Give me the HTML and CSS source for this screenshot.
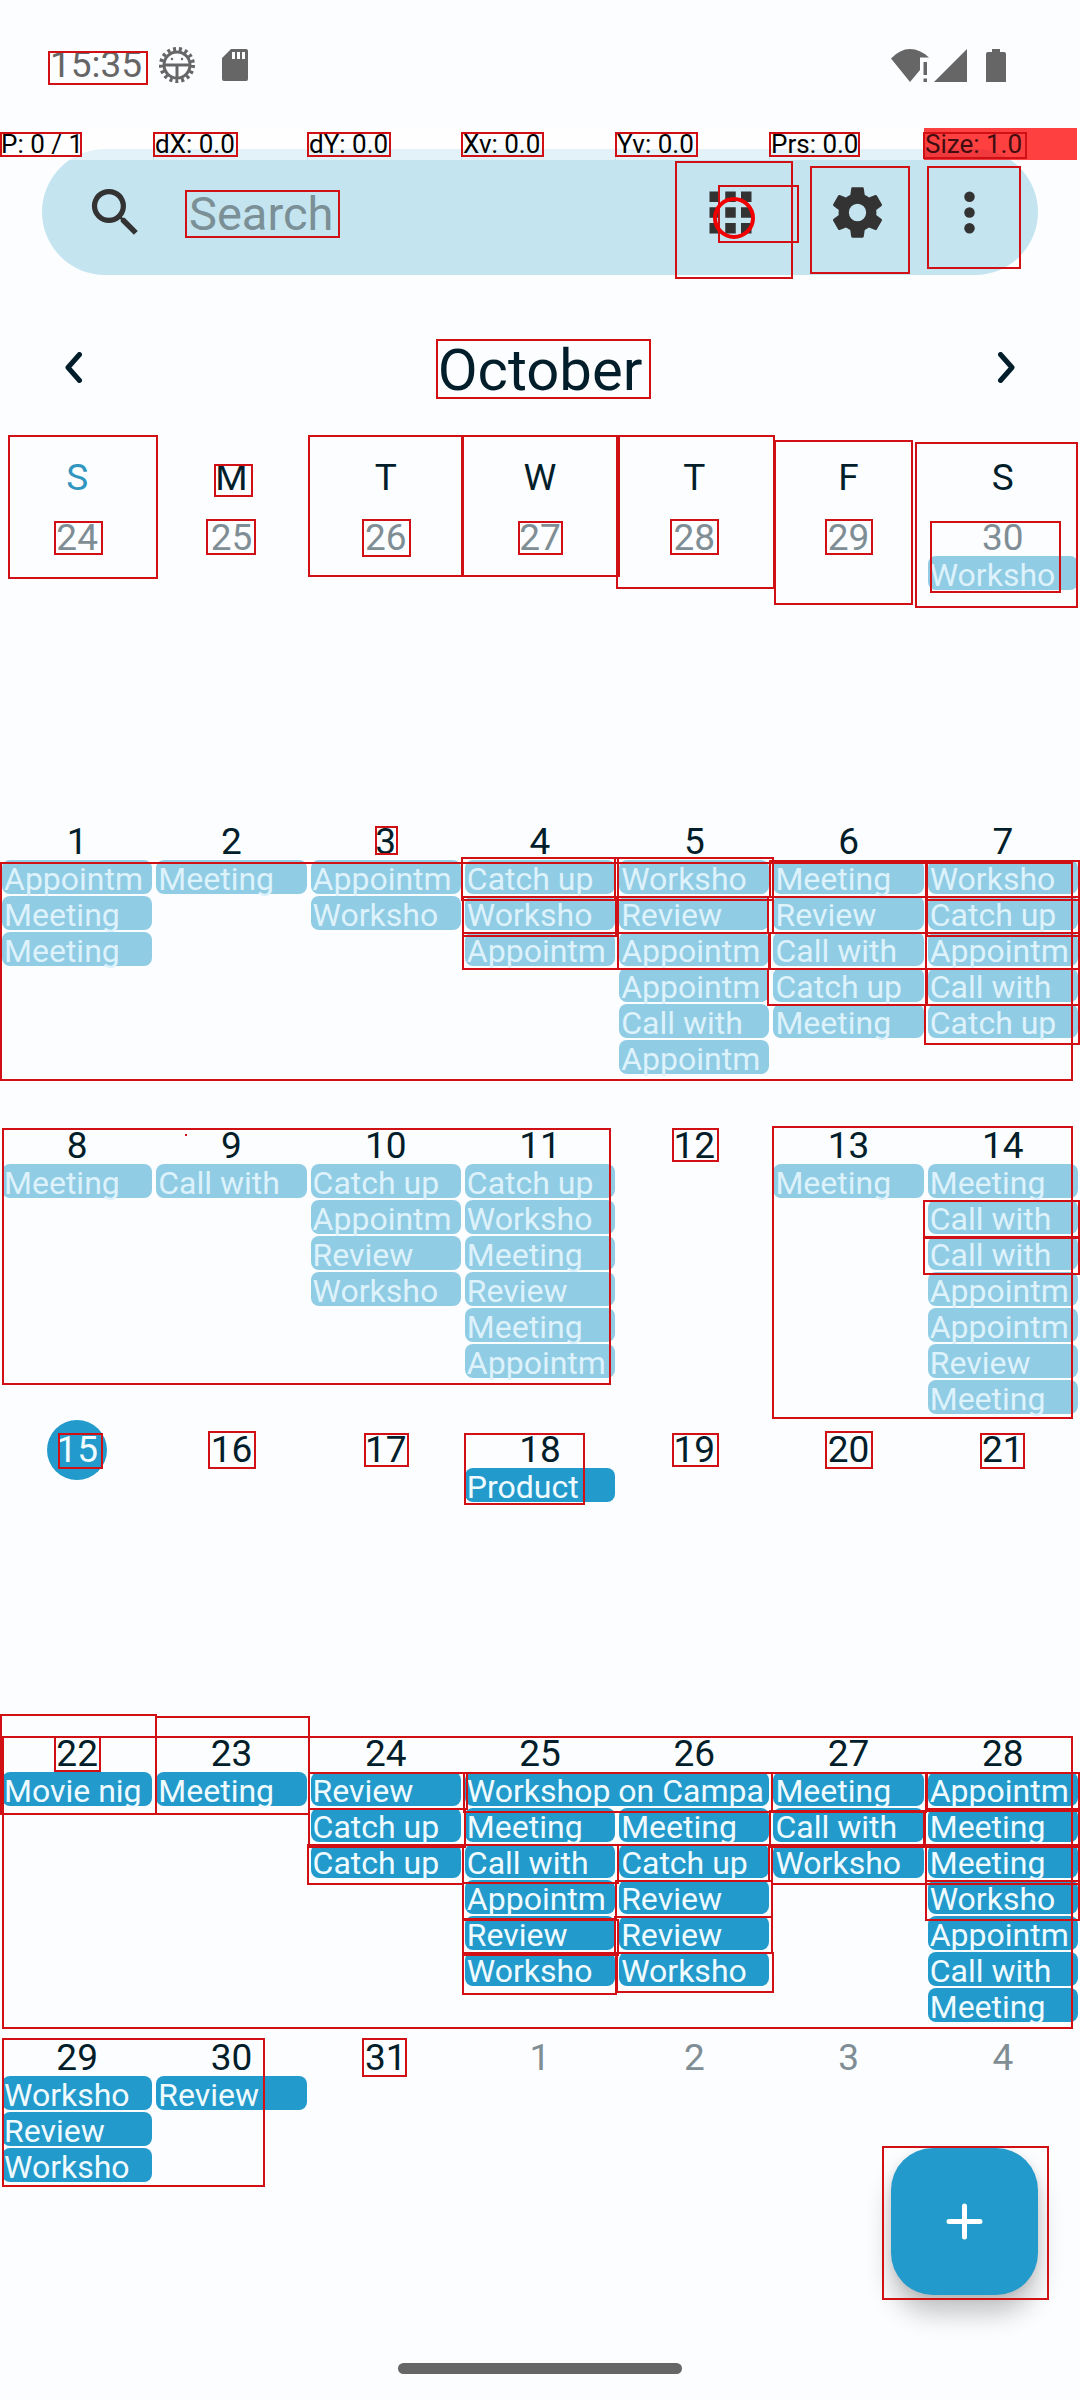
FILE: index.html
```html
<!DOCTYPE html>
<html lang="en">
<head>
<meta charset="utf-8">
<meta name="viewport" content="width=device-width, initial-scale=1">
<title>Calendar – October</title>
<link rel="stylesheet" href="styles.css">
</head>
<body>
<div class="screen">
  <div class="status">
    <time class="status-time">15:35</time>
    <svg class="status-debug" width="36" height="36" viewBox="0 0 36 36" fill="none" stroke="#666">
      <circle cx="18" cy="18" r="13" stroke-width="3"/>
      <circle cx="18" cy="18" r="16" stroke-width="4" stroke-dasharray="3 2.91"/>
      <path d="M5 18H31" stroke-width="3"/><path d="M18 19V32" stroke-width="3"/>
      <circle cx="13" cy="12" r="1.2" fill="#666" stroke="none"/><circle cx="23" cy="12" r="1.2" fill="#666" stroke="none"/>
    </svg>
    <svg class="status-card" width="26" height="32" viewBox="0 0 26 32"><path fill="#666" fill-rule="evenodd" d="M9 0H24Q26 0 26 2V30Q26 32 24 32H2Q0 32 0 30V9ZM10 3V10H13V3ZM15 3V10H18V3ZM20 3V10H23V3Z"/></svg>
    <svg class="status-wifi" width="38" height="33" viewBox="0 0 38 33" fill="#666"><path d="M0 9.500Q9 0 19 0T38 8.500H29V21L19 33Z"/><path d="M32.500 13H36V26H32.500ZM32.500 29.500H36V33H32.500Z"/></svg>
    <svg width="33" height="33" viewBox="0 0 33 33"><path fill="#666" d="M33 0V33H0Z"/></svg>
    <svg class="status-battery" width="20" height="33" viewBox="0 0 20 33"><path fill="#666" d="M6 0H14V3H18Q20 3 20 5V33H0V5Q0 3 2 3H6Z"/></svg>
  </div>

  <form class="searchbar" role="search">
    <label class="searchbar-label" for="q" aria-label="Search events">
      <svg class="icon" viewBox="0 0 24 24"><path d="M15.500 14h-.79l-.28-.27A6.471 6.471 0 0 0 16 9.500 6.500 6.500 0 1 0 9.500 16c1.610 0 3.090-.59 4.230-1.570l.27.28v.79l5 4.990L20.490 19l-4.990-5zm-6 0C7.010 14 5 11.990 5 9.500S7.010 5 9.500 5 14 7.010 14 9.500 11.990 14 9.500 14z"/></svg>
    </label>
    <input class="searchbar-input" id="q" type="text" placeholder="Search">
    <button class="searchbar-btn" type="button" aria-label="Change view">
      <svg class="icon" viewBox="0 0 24 24"><path d="M4 8h4V4H4v4zm6 12h4v-4h-4v4zm-6 0h4v-4H4v4zm0-6h4v-4H4v4zm6 0h4v-4h-4v4zm6-10v4h4V4h-4zm-6 4h4V4h-4v4zm6 6h4v-4h-4v4zm0 6h4v-4h-4v4z"/></svg>
    </button>
    <button class="searchbar-btn" type="button" aria-label="Settings">
      <svg class="icon" viewBox="0 0 24 24"><path d="M19.140 12.940c.04-.3.06-.61.06-.94 0-.32-.02-.64-.07-.94l2.030-1.580c.18-.14.23-.41.12-.61l-1.920-3.320c-.12-.22-.37-.29-.59-.22l-2.390.96c-.5-.38-1.030-.7-1.620-.94l-.36-2.540c-.04-.24-.24-.41-.48-.41h-3.840c-.24 0-.43.17-.47.41l-.36 2.540c-.59.24-1.130.57-1.620.94l-2.390-.96c-.22-.08-.47 0-.59.22L2.740 8.870c-.12.21-.08.47.12.61l2.030 1.580c-.05.3-.09.63-.09.94s.02.64.07.94l-2.030 1.580c-.18.14-.23.41-.12.61l1.920 3.320c.12.22.37.29.59.22l2.390-.96c.5.38 1.030.7 1.620.94l.36 2.540c.05.24.24.41.48.41h3.840c.24 0 .44-.17.47-.41l.36-2.540c.59-.24 1.130-.56 1.620-.94l2.390.96c.22.08.47 0 .59-.22l1.920-3.320c.12-.22.07-.47-.12-.61l-2.010-1.580zM12 15.300a3.300 3.300 0 1 1 0-6.600 3.300 3.300 0 0 1 0 6.600z"/></svg>
    </button>
    <button class="searchbar-btn searchbar-more" type="button" aria-label="More options">
      <svg class="icon" viewBox="0 0 24 24"><circle cx="12" cy="6" r="2"/><circle cx="12" cy="12" r="2"/><circle cx="12" cy="18" r="2"/></svg>
    </button>
  </form>

  <header class="month">
    <button class="month-btn" type="button" aria-label="Previous month"><svg width="17" height="31" viewBox="0 0 17 31"><path d="M14.500 2.500L3 15.500L14.500 28.500"/></svg></button>
    <h1 class="month-name">October</h1>
    <button class="month-btn" type="button" aria-label="Next month"><svg width="17" height="31" viewBox="0 0 17 31"><path d="M2.500 2.500L14 15.500L2.500 28.500"/></svg></button>
  </header>

  <main class="calendar">
    <div class="weekdays"><span class="sunday">S</span><span>M</span><span>T</span><span>W</span><span>T</span><span>F</span><span>S</span></div>

    <section class="week past">
      <div class="day other"><span class="date">24</span></div>
      <div class="day other"><span class="date">25</span></div>
      <div class="day other"><span class="date">26</span></div>
      <div class="day other"><span class="date">27</span></div>
      <div class="day other"><span class="date">28</span></div>
      <div class="day other"><span class="date">29</span></div>
      <div class="day other"><span class="date">30</span><ul class="events"><li>Worksho</li></ul></div>
    </section>

    <section class="week past">
      <div class="day"><span class="date">1</span><ul class="events"><li>Appointm</li><li>Meeting</li><li>Meeting</li></ul></div>
      <div class="day"><span class="date">2</span><ul class="events"><li>Meeting</li></ul></div>
      <div class="day"><span class="date">3</span><ul class="events"><li>Appointm</li><li>Worksho</li></ul></div>
      <div class="day"><span class="date">4</span><ul class="events"><li>Catch up</li><li>Worksho</li><li>Appointm</li></ul></div>
      <div class="day"><span class="date">5</span><ul class="events"><li>Worksho</li><li>Review</li><li>Appointm</li><li>Appointm</li><li>Call with</li><li>Appointm</li></ul></div>
      <div class="day"><span class="date">6</span><ul class="events"><li>Meeting</li><li>Review</li><li>Call with</li><li>Catch up</li><li>Meeting</li></ul></div>
      <div class="day"><span class="date">7</span><ul class="events"><li>Worksho</li><li>Catch up</li><li>Appointm</li><li>Call with</li><li>Catch up</li></ul></div>
    </section>

    <section class="week past">
      <div class="day"><span class="date">8</span><ul class="events"><li>Meeting</li></ul></div>
      <div class="day"><span class="date">9</span><ul class="events"><li>Call with</li></ul></div>
      <div class="day"><span class="date">10</span><ul class="events"><li>Catch up</li><li>Appointm</li><li>Review</li><li>Worksho</li></ul></div>
      <div class="day"><span class="date">11</span><ul class="events"><li>Catch up</li><li>Worksho</li><li>Meeting</li><li>Review</li><li>Meeting</li><li>Appointm</li></ul></div>
      <div class="day"><span class="date">12</span></div>
      <div class="day"><span class="date">13</span><ul class="events"><li>Meeting</li></ul></div>
      <div class="day"><span class="date">14</span><ul class="events"><li>Meeting</li><li>Call with</li><li>Call with</li><li>Appointm</li><li>Appointm</li><li>Review</li><li>Meeting</li></ul></div>
    </section>

    <section class="week">
      <div class="day"><span class="date today">15</span></div>
      <div class="day"><span class="date">16</span></div>
      <div class="day"><span class="date">17</span></div>
      <div class="day"><span class="date">18</span><ul class="events"><li>Product</li></ul></div>
      <div class="day"><span class="date">19</span></div>
      <div class="day"><span class="date">20</span></div>
      <div class="day"><span class="date">21</span></div>
    </section>

    <section class="week">
      <div class="day"><span class="date">22</span><ul class="events"><li>Movie nig</li></ul></div>
      <div class="day"><span class="date">23</span><ul class="events"><li>Meeting</li></ul></div>
      <div class="day"><span class="date">24</span><ul class="events"><li>Review</li><li>Catch up</li><li>Catch up</li></ul></div>
      <div class="day"><span class="date">25</span><ul class="events"><li class="two-days">Workshop on Campa</li><li>Meeting</li><li>Call with</li><li>Appointm</li><li>Review</li><li>Worksho</li></ul></div>
      <div class="day"><span class="date">26</span><ul class="events after-span"><li>Meeting</li><li>Catch up</li><li>Review</li><li>Review</li><li>Worksho</li></ul></div>
      <div class="day"><span class="date">27</span><ul class="events"><li>Meeting</li><li>Call with</li><li>Worksho</li></ul></div>
      <div class="day"><span class="date">28</span><ul class="events"><li>Appointm</li><li>Meeting</li><li>Meeting</li><li>Worksho</li><li>Appointm</li><li>Call with</li><li>Meeting</li></ul></div>
    </section>

    <section class="week">
      <div class="day"><span class="date">29</span><ul class="events"><li>Worksho</li><li>Review</li><li>Worksho</li></ul></div>
      <div class="day"><span class="date">30</span><ul class="events"><li>Review</li></ul></div>
      <div class="day"><span class="date">31</span></div>
      <div class="day other"><span class="date">1</span></div>
      <div class="day other"><span class="date">2</span></div>
      <div class="day other"><span class="date">3</span></div>
      <div class="day other"><span class="date">4</span></div>
    </section>
  </main>

  <footer class="gesture"><span class="gesture-bar"></span></footer>

  <button class="fab" type="button" aria-label="New event"><svg width="37" height="37" viewBox="0 0 37 37"><path d="M18.500 3V34M3 18.500H34"/></svg></button>

  <!-- pointer location strip -->
  <div class="pointer">
    <span>P: 0 / 1</span><span>dX: 0.0</span><span>dY: 0.0</span><span>Xv: 0.0</span><span>Yv: 0.0</span><span>Prs: 0.0</span><span class="pointer-size">Size: 1.0</span>
  </div>

  <!-- detected element bounds -->
  <svg class="bounds" viewBox="0 0 1080 2400" aria-hidden="true">
    <path d="M49 52H147V84H49ZM1 133H81V156H1ZM154 133H237V156H154ZM308 133H390V156H308ZM462 133H543V156H462ZM616 133H697V156H616ZM770 133H859V156H770ZM924 133H1026V158H924Z
    M186 191H339V237H186ZM676 162H792V278H676ZM719 186H798V242H719ZM811 167H909V273H811ZM928 167H1020V268H928ZM437 340H650V398H437Z"/>
    <path d="M9 436H157V578H9ZM215 465H252V496H215ZM55 522H102V554H55ZM207 520H255V554H207ZM309 436H462V576H309ZM363 520H410V556H363ZM463 436H619V576H463ZM519 522H562V554H519ZM617 436H774V588H617ZM671 520H718V554H671ZM775 441H912V604H775ZM826 520H872V554H826ZM916 443H1077V607H916ZM931 522H1060V592H931Z"/>
    <path d="M1 863H1072V1080H1ZM376 827H397V854H376ZM462 858H618V900H462ZM463 897H616V936H463ZM463 933H618V969H463ZM615 858H773V900H615ZM618 897H768V933H618ZM618 933H770V969H618ZM770 861H926V897H770ZM773 897H926V933H773ZM769 933H926V969H769ZM768 969H926V1005H768ZM927 861H1079V900H927ZM927 897H1079V936H927ZM926 933H1079V969H926ZM927 969H1079V1005H927ZM925 1005H1079V1044H925Z"/>
    <path d="M3 1129H610V1384H3ZM185 1135H187M673 1129H718V1161H673ZM773 1127H1072V1418H773ZM924 1201H1079V1237H924ZM924 1238H1079V1274H924ZM59 1434H102V1468H59ZM209 1432H255V1468H209ZM365 1434H408V1466H365ZM465 1434H584V1504H465ZM673 1434H718V1466H673ZM826 1432H872V1468H826ZM981 1434H1024V1468H981Z"/>
    <path d="M1 1715H156V1814H1ZM156 1717H309V1814H156ZM3 1737H1072V2028H3ZM55 1737H100V1771H55ZM309 1773H467V1809H309ZM309 1809H465V1847H309ZM308 1845H463V1884H308ZM464 1773H772V1812H464ZM465 1812H770V1845H465ZM463 1845H618V1883H463ZM463 1883H616V1919H463ZM463 1920H618V1955H463ZM463 1953H616V1994H463ZM618 1845H769V1881H618ZM616 1881H772V1917H616ZM615 1917H772V1953H615ZM617 1953H773V1992H617ZM772 1773H926V1812H772ZM770 1811H924V1847H770ZM772 1845H926V1884H772ZM927 1773H1079V1809H927ZM925 1811H1079V1847H925ZM926 1845H1079V1884H926ZM926 1881H1079V1920H926Z
    M3 2039H264V2186H3ZM363 2039H406V2076H363ZM883 2147H1048V2299H883Z"/>
    <circle cx="734" cy="218" r="19"/>
  </svg>
</div>
</body>
</html>
```
FILE: styles.css
```css
:root {
  --bg: #fcfdff;
  --ink: #021e2a;
  --accent: #229acb;
  --muted: #7f8d94;
  --bar: #c4e4f0;
  --system: #666;
}

* { box-sizing: border-box; }

body {
  margin: 0;
  background: var(--bg);
  color: var(--ink);
  font-family: Roboto, "Liberation Sans", sans-serif;
}

button {
  display: flex;
  align-items: center;
  justify-content: center;
  padding: 0;
  border: 0;
  background: none;
  color: inherit;
  font: inherit;
}

svg { display: block; flex: none; }

.screen {
  position: relative;
  display: flex;
  flex-direction: column;
  min-height: 100vh;
  overflow: hidden;
}

/* system status bar */
.status {
  display: flex;
  align-items: center;
  padding: 47px 74px 66px 50px;
}
.status-time {
  color: var(--system);
  font-size: 37px;
  line-height: 36px;
}
.status-debug { margin-left: 17px; }
.status-card { margin-left: 27px; }
.status-wifi { margin-left: auto; margin-right: 5px; }
.status-battery { margin-left: 19px; }

/* search bar */
.searchbar {
  display: flex;
  align-items: stretch;
  height: 126px;
  margin: 0 42px;
  padding: 0 21px 0 42px;
  border-radius: 63px;
  background: var(--bar);
}
.searchbar-label { display: flex; align-items: center; }
.icon { width: 63px; height: 63px; fill: #333; }
.searchbar-input {
  flex: 1;
  min-width: 0;
  margin-left: 42px;
  padding: 2px 0 0;
  border: 0;
  outline: 0;
  background: none;
  color: var(--ink);
  font: 47px Roboto, "Liberation Sans", sans-serif;
}
.searchbar-input::placeholder { color: #7b8f96; opacity: 1; }
.searchbar-btn { width: 127px; }
.searchbar-more { width: 96px; }

/* month switcher */
.month {
  display: flex;
  align-items: flex-start;
  justify-content: space-between;
  padding: 61px 42px 56px;
}
.month-btn { width: 62px; height: 62px; }
.month-btn path {
  fill: none;
  stroke: var(--ink);
  stroke-width: 5;
  stroke-linecap: round;
  stroke-linejoin: round;
}
.month-name {
  margin: 0;
  font-size: 58px;
  font-weight: 400;
  line-height: 68px;
}

/* calendar grid */
.weekdays, .week {
  display: grid;
  grid-template-columns: repeat(7, minmax(0, 1fr));
}
.weekdays {
  margin-bottom: 24px;
  font-size: 37px;
  line-height: 36px;
  text-align: center;
}
.sunday { color: #3096c0; }
.week { min-height: 304px; }
.date {
  display: block;
  font-size: 37px;
  line-height: 36px;
  text-align: center;
}
.other .date { color: var(--muted); }
.today {
  position: relative;
  z-index: 0;
  color: #f0fbff;
}
.today::before {
  content: "";
  position: absolute;
  z-index: -1;
  top: 50%;
  left: 50%;
  width: 60px;
  height: 60px;
  border-radius: 50%;
  background: var(--accent);
  transform: translate(-50%, -50%);
}
.events {
  display: flex;
  flex-direction: column;
  gap: 2px;
  margin: 0;
  padding: 0 2px;
  list-style: none;
}
.events li {
  height: 34px;
  padding-left: 2px;
  border-radius: 8px;
  background: var(--accent);
  color: #f0fbff;
  font-size: 32px;
  line-height: 38px;
  white-space: nowrap;
}
.past .events li { background: #90cce4; color: #ddf2fb; }
.events .two-days { width: calc(200% + 4px); }
.after-span { padding-top: 36px; }

/* gesture navigation */
.gesture {
  display: flex;
  justify-content: center;
  margin-top: auto;
  padding: 18px 0 26px;
}
.gesture-bar {
  width: 284px;
  height: 11px;
  border-radius: 6px;
  background: var(--system);
}

/* floating action button */
.fab {
  position: absolute;
  right: 42px;
  bottom: 105px;
  width: 147px;
  height: 147px;
  border-radius: 42px;
  background: var(--accent);
  box-shadow: 0 18px 26px rgba(0, 0, 0, .24), 0 2px 8px rgba(0, 0, 0, .08);
}
.fab path { stroke: #fff; stroke-width: 5; stroke-linecap: round; }

/* developer overlays */
.pointer {
  position: absolute;
  top: 128px;
  left: 0;
  right: 3px;
  display: grid;
  grid-template-columns: repeat(7, minmax(0, 1fr));
  gap: 1px;
  color: #000;
  font-size: 26px;
  line-height: 32px;
}
.pointer span {
  padding-left: 1px;
  background: rgba(255, 255, 255, .5);
  white-space: nowrap;
}
.pointer .pointer-size { background: rgba(255, 0, 0, .75); color: #400d10; }

.bounds {
  position: absolute;
  top: 0;
  left: 0;
  width: 100%;
  height: auto;
  fill: none;
  stroke: #d01014;
  stroke-width: 2;
  pointer-events: none;
}
.bounds circle { stroke: #f00000; stroke-width: 4; }
```
